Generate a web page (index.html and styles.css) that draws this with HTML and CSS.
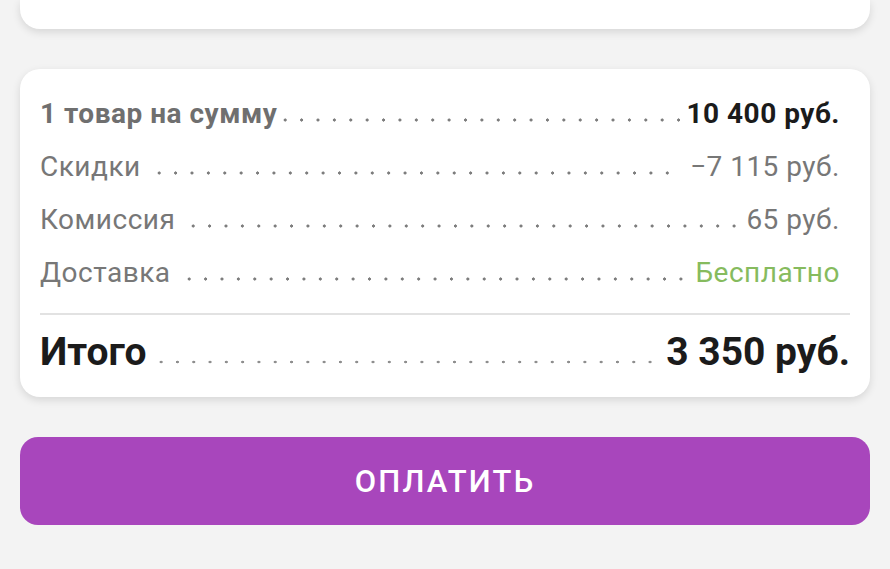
FILE: index.html
```html
<!DOCTYPE html>
<html lang="ru">
<head>
  <meta charset="UTF-8">
  <meta name="viewport" content="width=device-width, initial-scale=1.0">
  <title>Оплата заказа</title>
  <link rel="stylesheet" href="styles.css">
</head>
<body>
  <div class="card card-top"></div>

  <div class="card summary">
    <div class="row row-main">
      <span class="label">1 товар на сумму</span>
      <span class="leader"></span>
      <span class="value">10 400 руб.</span>
    </div>
    <div class="row">
      <span class="label">Скидки</span>
      <span class="leader"></span>
      <span class="value">−7 115 руб.</span>
    </div>
    <div class="row tight">
      <span class="label">Комиссия</span>
      <span class="leader"></span>
      <span class="value">65 руб.</span>
    </div>
    <div class="row tight">
      <span class="label">Доставка</span>
      <span class="leader"></span>
      <span class="value free">Бесплатно</span>
    </div>
    <div class="divider"></div>
    <div class="row row-total">
      <span class="label">Итого</span>
      <span class="leader"></span>
      <span class="value">3 350 руб.</span>
    </div>
  </div>

  <button class="pay-button">Оплатить</button>
</body>
</html>
```

FILE: styles.css
```css
body {
  margin: 0;
  padding: 0 20px;
  background: #f3f3f3;
  font-family: Roboto, "Noto Sans", sans-serif;
}
.card {
  background: #fff;
  border-radius: 20px;
  box-shadow: 0 3px 8px rgba(0, 0, 0, 0.12);
}
.card-top {
  height: 29px;
  border-radius: 0 0 20px 20px;
}
.summary {
  margin-top: 40px;
  padding: 18px 20px 8px 20px;
}
.row {
  display: flex;
  align-items: baseline;
  height: 53px;
  line-height: 53px;
  padding-right: 10px;
  font-size: 28px;
  color: #777;
  letter-spacing: 0.5px;
}
.leader {
  flex: 1;
  height: 6px;
  margin: 0 8px 0 10px;
  background-image: radial-gradient(circle, #7d7d7d 1.4px, transparent 1.8px);
  background-size: 16.4px 6px;
  background-repeat: repeat-x;
  background-position: 0 0;
}
.tight .leader {
  margin-right: 0;
}
.row-main .label {
  font-weight: bold;
  color: #6f6f6f;
}
.row-main .leader {
  margin-left: 0;
  margin-right: 2px;
}
.row-main .value {
  font-weight: bold;
  color: #1b1b1b;
}
.free {
  color: #86bb5e;
}
.divider {
  height: 2px;
  background: #e2e2e2;
  margin-top: 14px;
}
.row-total {
  height: 74px;
  line-height: 74px;
  padding-right: 0;
  font-size: 39px;
  font-weight: bold;
  color: #1b1b1b;
  letter-spacing: 0;
}
.row-total .leader {
  margin: 0 2px 0 6px;
  background-image: radial-gradient(circle, #8e8e8e 1.2px, transparent 1.6px);
  background-size: 16.3px 6px;
}
.pay-button {
  display: block;
  width: 100%;
  height: 88px;
  margin-top: 40px;
  border: none;
  border-radius: 18px;
  background: #a846bc;
  color: #fff;
  font-family: Roboto, "Noto Sans", sans-serif;
  font-size: 31px;
  font-weight: 500;
  letter-spacing: 2.2px;
  text-transform: uppercase;
  cursor: pointer;
}
```
